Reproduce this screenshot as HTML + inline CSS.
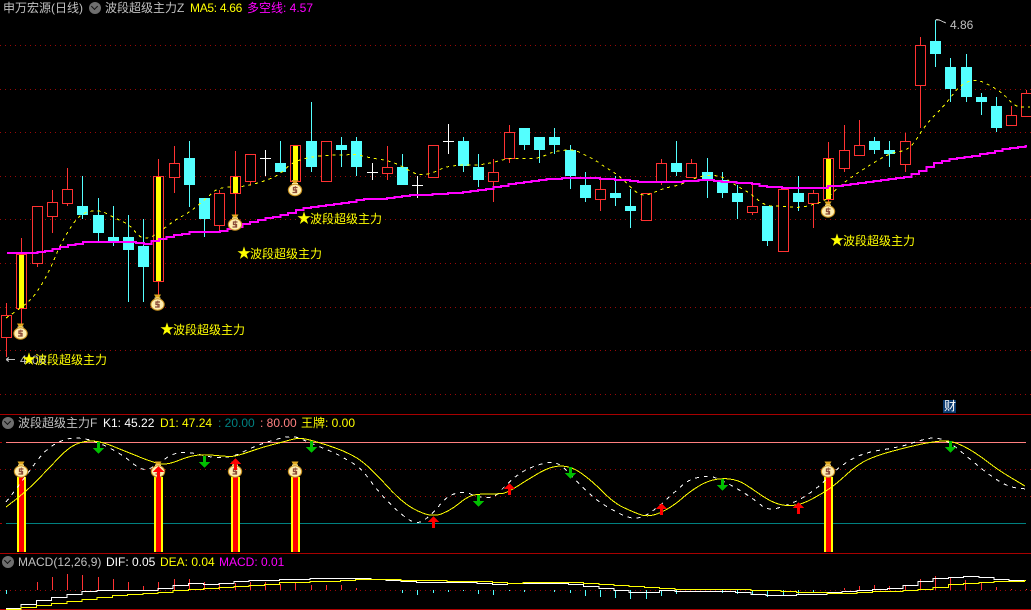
<!DOCTYPE html>
<html><head><meta charset="utf-8"><style>
html,body{margin:0;padding:0;background:#000;}
#w{position:relative;width:1031px;height:610px;overflow:hidden;background:#000;font-family:"WenQuanYi Zen Hei","Liberation Sans","Noto Sans CJK SC",sans-serif;font-size:12px;line-height:14px;}
#w svg{position:absolute;left:0;top:0;}
#w span{position:absolute;white-space:pre;}
.g{color:#c0c0c0}.y{color:#ff0}.m{color:#f0f}.h{color:#fff}
.c{position:absolute;width:12px;height:12px;border-radius:50%;background:#6e6e6e;}
.c:after{content:"";position:absolute;left:3px;top:2px;width:4px;height:4px;border-right:1.5px solid #111;border-bottom:1.5px solid #111;transform:rotate(45deg);}
#w b{display:inline-block;width:12px;font-weight:normal;font-family:"Noto Sans CJK SC",sans-serif;font-size:14px;line-height:12px;text-indent:-1px;}
</style></head><body><div id="w">
<svg width="1031" height="610" viewBox="0 0 1031 610">
<defs><g id="bag">
<path d="M-3.500-8.500h7l-2 3.500h-3z" fill="#e0a820"/><path d="M-3-5.500h6v2.500h-6z" fill="#fff0a0"/>
<ellipse cx="0" cy="1.500" rx="7.200" ry="6.200" fill="#c89020"/><ellipse cx="0" cy="1.500" rx="6.100" ry="5.200" fill="#ffeeb0"/>
<path d="M2.500-1h-4v2.500h3v2.500h-4" fill="none" stroke="#8a4a38" stroke-width="1.300"/><path d="M.3-2.500v7" stroke="#8a4a38" stroke-width=".8"/>
</g></defs>
<g shape-rendering="crispEdges">
<!-- grid -->
<path d="M0 45.500H1031M0 89.500H1031M0 132.500H1031M0 176.500H1031M0 219.500H1031M0 263.500H1031M0 307.500H1031M0 350.500H1031M0 394.500H1031M0 469.500H1031M0 496.500H1031M0 590.500H1031" stroke="#9a0808" stroke-dasharray="1 4" fill="none"/>
<path d="M0 414.500H1031M0 553.500H1031M0 609.500H1031" stroke="#a80000" fill="none"/>
<path d="M6 442.500H1026" stroke="#ff8080" fill="none"/><path d="M6 523.500H1026" stroke="#008080" fill="none"/>
<path d="M0 442.500h2M0 523.500h2" stroke="#a00" fill="none"/>
<!-- wicks -->
<path fill="none" stroke="#ff3232" d="M6.500 303V357M21.500 238V327M37.500 206V267M52.500 190V233M67.500 168V206M158.500 159V295M174.500 146V193M219.500 190V233M235.500 151V215M250.500 154V185M295.500 145V184M387.500 146V180M493.500 159V202M509.500 125V163M600.500 180V211M661.500 159V185M691.500 159V177M752.500 185V215M813.500 190V228M828.500 142V204M844.500 125V172M859.500 120V155M905.500 133V172M920.500 37V128M1011.500 106V125M1026.500 90V93"/>
<path fill="none" stroke="#54ffff" d="M82.500 176V219M98.500 198V241M113.500 206V246M128.500 215V302M143.500 219V302M189.500 141V207M204.500 198V237M280.500 141V172M311.500 102V172M341.500 137V167M356.500 137V176M402.500 154V185M463.500 137V172M478.500 154V187M524.500 128V150M539.500 137V163M554.500 128V154M570.500 145V189M585.500 172V202M615.500 176V206M630.500 189V228M676.500 141V176M707.500 158V198M722.500 172V198M737.500 185V219M767.500 206V246M798.500 176V211M874.500 137V154M889.500 141V167M935.500 20V67M950.500 58V102M966.500 54V102M981.500 93V115M996.500 97V132"/>
<path fill="none" stroke="#fff" d="M265.500 150V176M260 158.500h11M372.500 163V180M367 172.500h11M417.500 176V198M412 185.500h11M448.500 124V154M443 141.500h11"/>
<!-- bodies -->
<path fill="#000" stroke="#ff3232" d="M1.500 315.500h10v22h-10zM16.500 254.500h10v54h-10zM32.500 206.500h10v57h-10zM47.500 202.500h10v14h-10zM62.500 189.500h10v14h-10zM153.500 176.500h10v105h-10zM169.500 163.500h10v14h-10zM214.500 193.500h10v32h-10zM230.500 176.500h10v17h-10zM245.500 154.500h10v27h-10zM290.500 145.500h10v36h-10zM321.500 141.500h10v40h-10zM382.500 167.500h10v6h-10zM428.500 145.500h10v32h-10zM488.500 172.500h10v9h-10zM504.500 132.500h10v26h-10zM595.500 189.500h10v10h-10zM641.500 193.500h10v27h-10zM656.500 163.500h10v18h-10zM686.500 163.500h10v14h-10zM747.500 206.500h10v6h-10zM778.500 189.500h10v62h-10zM808.500 193.500h10v10h-10zM823.500 158.500h10v41h-10zM839.500 150.500h10v18h-10zM854.500 145.500h10v10h-10zM900.500 141.500h10v23h-10zM915.500 45.500h10v40h-10zM1006.500 115.500h10v10h-10zM1021.500 93.500h10v23h-10z"/>
<path fill="#54ffff" d="M77 206h11v9h-11zM93 215h11v18h-11zM108 237h11v4h-11zM123 237h11v13h-11zM138 246h11v21h-11zM184 158h11v27h-11zM199 198h11v21h-11zM275 163h11v9h-11zM306 141h11v26h-11zM336 145h11v5h-11zM351 141h11v26h-11zM397 167h11v18h-11zM458 141h11v25h-11zM473 167h11v13h-11zM519 128h11v17h-11zM534 137h11v13h-11zM549 137h11v8h-11zM565 150h11v26h-11zM580 185h11v13h-11zM610 193h11v5h-11zM625 206h11v5h-11zM671 163h11v9h-11zM702 172h11v8h-11zM717 180h11v13h-11zM732 193h11v9h-11zM762 206h11v35h-11zM793 193h11v9h-11zM869 141h11v9h-11zM884 150h11v4h-11zM930 41h11v13h-11zM945 67h11v22h-11zM961 67h11v30h-11zM976 97h11v5h-11zM991 106h11v22h-11z"/>
<path fill="#ff0" d="M19 255h5v53h-5zM156 177h5v104h-5zM233 177h5v16h-5zM293 146h5v35h-5zM826 159h5v40h-5z"/>
<!-- MA5 dashed -->
<polyline class="s" fill="none" stroke="#ff0" stroke-dasharray="3 4" points="6,318 21,308 35,296 50,270 60,245 75,220 85,212 100,210 115,218 130,225 140,238 150,238 158,233 175,220 190,212 208,197 215,190 225,187 240,187 255,184 270,179 280,174 293,162 310,157 330,155 346,155 356,154 370,158 385,160 395,163 405,168 415,174 425,175 435,172 445,167 460,165 480,165 495,162 510,158 525,159 540,158 552,152 565,150 575,150 585,155 595,160 605,167 615,173 625,181 635,192 645,196 655,192 665,188 680,185 690,180 705,175 722,176 735,185 750,193 765,206 780,206 800,208 815,204 825,201 835,190 850,178 870,165 890,153 910,150 925,125 945,105 960,85 975,79 990,85 1005,95 1015,107 1030,107"/>
<!-- magenta -->
<polyline class="t1" fill="none" stroke="#f0f" stroke-width="2" points="7,253 27,253 45,251 60,247 82,242 115,242 128,242 143,244 155,240 170,236 190,232 215,232 228,229 243,224 262,219 280,215 300,209 320,206 344,203 356,200 372,199 390,198 402,196 417,195 440,194 465,192 490,188 510,184 530,181 550,179 570,178 590,178 600,179 620,180 630,181 645,182 670,182 688,181 705,180 722,182 740,183 752,184 765,187 785,188 800,188 820,188 830,186 845,185 860,183 880,180 900,178 905,177 915,173 925,168 935,163 950,159 970,156 1000,150 1015,147 1027,146"/>
<!-- indicator bars -->
<path fill="#ff0" d="M17 477h9v75h-9zM154 477h9v75h-9zM231 477h9v75h-9zM291 477h9v75h-9zM824 477h9v75h-9z"/>
<path fill="#f00" d="M19 477h5v75h-5zM156 477h5v75h-5zM233 477h5v75h-5zM293 477h5v75h-5zM826 477h5v75h-5z"/>
<!-- K/D -->
<polyline class="s" fill="none" stroke="#fff" stroke-dasharray="4 5" points="6,502 17,488 30,470 47,448 67,438 83,438 100,443 123,455 143,472 157,465 173,453 190,452 213,458 233,457 253,447 270,441 293,435 310,443 333,452 344,458 361,468 377,490 394,508 411,522 421,523 434,512 447,496 464,491 477,497 494,498 504,487 517,475 531,467 552,461 564,467 577,482 594,498 607,507 630,519 644,517 657,508 677,490 688,480 708,475 721,480 738,489 755,500 768,511 788,505 803,498 821,485 835,470 861,453 901,447 921,440 936,437 951,443 971,460 988,474 1008,487 1026,489"/>
<polyline class="s" fill="none" stroke="#ff0" points="6,507 25,493 50,467 68,448 83,441 100,441 127,452 157,464 170,464 187,457 203,454 230,457 240,455 263,447 283,442 297,438 307,439 327,445 344,451 361,460 377,475 397,497 414,510 434,517 451,510 467,497 477,494 497,494 507,493 527,480 551,466 571,466 591,480 614,503 631,511 646,517 661,513 677,503 688,493 705,482 721,478 738,480 751,488 768,500 783,506 801,505 823,493 835,485 858,464 878,455 908,447 931,442 951,440 975,452 998,470 1025,486"/>
<!-- MACD hist -->
<path fill="none" stroke="#ff3232" d="M37.500 582V590M52.500 577V590M67.500 574V590M82.500 575V590M98.500 577V590M113.500 579V590M128.500 582V590M143.500 586V590M158.500 582V590M174.500 579V590M189.500 579V590M204.500 582V590M219.500 583V590M235.500 583V590M250.500 582V590M265.500 582V590M280.500 584V590M295.500 582V590M311.500 585V590M326.500 585V590M341.500 585V590M356.500 588V590M844.500 588V590M859.500 586V590M874.500 585V590M889.500 586V590M905.500 585V590M920.500 579V590M935.500 576V590M950.500 577V590M965.500 580V590M981.500 582V590M996.500 587V590M1011.500 589V590M1026.500 589V590"/>
<path fill="none" stroke="#54ffff" d="M6.500 590V594M402.500 590V593M417.500 590V595M433.500 590V593M448.500 590V592M463.500 590V591M478.500 590V594M493.500 590V595M509.500 590V591M524.500 590V592M554.500 590V592M570.500 590V593M585.500 590V596M600.500 590V597M615.500 590V598M630.500 590V599M646.500 590V599M661.500 590V596M676.500 590V594M722.500 590V593M737.500 590V594M752.500 590V595M767.500 591V597M783.500 590V595M798.500 590V595M813.500 590V593"/>
<polyline class="t2" fill="none" stroke="#fff" stroke-width="1" points="6,608 15,605 27,603 40,599 55,596 75,592 100,590 150,590 167,586 183,583 203,584 227,582 250,580 287,579 320,578 349,578 391,580 411,582 441,582 456,582 471,583 486,584 501,583 532,583 562,583 574,585 589,587 607,589 619,590 627,592 654,592 654,590 688,591 714,591 730,592 745,593 756,594 775,595 816,594 825,592 851,590 866,589 881,588 896,587 913,583 923,580 943,577 958,576 973,577 988,578 1003,580 1026,580"/>
<polyline class="t2" fill="none" stroke="#ff0" stroke-width="1" points="6,609 40,605 55,603 97,597 127,594 157,592 177,590 197,588 233,586 257,584 287,582 320,581 344,580 349,579 391,579 411,580 456,581 471,581 486,582 501,583 517,582 562,582 577,583 592,584 607,585 622,586 637,587 654,588 688,589 730,589 760,590 776,591 806,592 836,593 851,592 881,591 897,590 913,589 928,588 943,585 958,583 973,582 1003,581 1026,580"/>
<!-- arrows -->
<path fill="#00c000" d="M97 442h3v6h4l-5.500 6-5.500-6h4zM203 456h3v6h4l-5.500 6-5.500-6h4zM310 441h3v6h4l-5.500 6-5.500-6h4zM477 495h3v6h4l-5.500 6-5.500-6h4zM569 467h3v6h4l-5.500 6-5.500-6h4zM721 479h3v6h4l-5.500 6-5.500-6h4zM949 441h3v6h4l-5.500 6-5.500-6h4z"/>
</g>
<!-- bags -->
<use href="#bag" x="20.500" y="332"/><use href="#bag" x="157.500" y="303"/><use href="#bag" x="235" y="223"/><use href="#bag" x="295" y="188.500"/><use href="#bag" x="828" y="210"/>
<use href="#bag" x="21" y="470"/><use href="#bag" x="158" y="470"/><use href="#bag" x="235" y="470"/><use href="#bag" x="295" y="470"/><use href="#bag" x="828" y="470"/>
<g shape-rendering="crispEdges">
<path fill="#f00" d="M158.500 466l5.500 6h-4v6h-3v-6h-4zM235.500 458l5.500 6h-4v6h-3v-6h-4zM433.500 516l5.500 6h-4v6h-3v-6h-4zM509.500 483l5.500 6h-4v6h-3v-6h-4zM661.500 503l5.500 6h-4v6h-3v-6h-4zM798.500 502l5.500 6h-4v6h-3v-6h-4z"/>
<path fill="none" stroke="#c0c0c0" d="M6 359.500h9M6 359.500l3-2M6 359.500l3 2M936 19.500h2l8 3.500M935.500 20h3"/>
<rect x="943" y="400" width="13" height="13" fill="#0a3a70"/>
</g>
</svg>

<span class="g" style="left:3px;top:1px">申万宏源(日线)</span>
<i class="c" style="left:89px;top:2px"></i>
<span class="g" style="left:105px;top:1px">波段超级主力Z</span>
<span class="y" style="left:190px;top:1px;letter-spacing:-.3px">MA5: 4.66</span>
<span class="m" style="left:247px;top:1px">多空线: 4.57</span>

<span class="g" style="left:950px;top:18px">4.86</span>
<span class="g" style="left:20px;top:353px;letter-spacing:1px">4.08</span>

<span class="y" style="left:298px;top:212px"><b>★</b>波段超级主力</span>
<span class="y" style="left:238px;top:247px"><b>★</b>波段超级主力</span>
<span class="y" style="left:161px;top:323px"><b>★</b>波段超级主力</span>
<span class="y" style="left:831px;top:234px"><b>★</b>波段超级主力</span>
<span class="y" style="left:23px;top:353px"><b>★</b>波段超级主力</span>
<span class="h" style="left:944px;top:399px">财</span>

<i class="c" style="left:2px;top:417px"></i>
<span class="g" style="left:18px;top:416px">波段超级主力F</span>
<span class="h" style="left:103px;top:416px">K1: 45.22</span>
<span class="y" style="left:160px;top:416px">D1: 47.24</span>
<span style="left:218px;top:416px;color:#008080">: 20.00</span>
<span style="left:260px;top:416px;color:#ff8080">: 80.00</span>
<span class="y" style="left:301px;top:416px">王牌: 0.00</span>

<i class="c" style="left:2px;top:556px"></i>
<span class="g" style="left:18px;top:555px">MACD(12,26,9)</span>
<span class="h" style="left:106px;top:555px">DIF: 0.05</span>
<span class="y" style="left:160px;top:555px">DEA: 0.04</span>
<span class="m" style="left:219px;top:555px">MACD: 0.01</span>
</div>
<script>
document.querySelectorAll('polyline[class]').forEach(function(p){
  var k=p.getAttribute('class'),a=p.getAttribute('points').trim().split(/\s+/).map(function(s){return s.split(',').map(Number)}),d='',i,n=a.length;
  if(k=='s'){
    d='M'+a[0];
    for(i=1;i<n-1;i++){d+='Q'+a[i]+' '+((a[i][0]+a[i+1][0])/2)+','+((a[i][1]+a[i+1][1])/2)}
    d+='L'+a[n-1];
  }else{
    var st=k=='t1'?7.6:15.2,x=a[0][0],j=0,e=a[n-1][0];
    d='M'+x+' '+(a[0][1]+(k=='t2'?.5:0));
    for(;x<=e;x+=st){
      while(j<n-2&&a[j+1][0]<x)j++;
      var u=a[j+1][0]==a[j][0]?0:(x-a[j][0])/(a[j+1][0]-a[j][0]);
      var y=Math.round(a[j][1]+(a[j+1][1]-a[j][1])*u)+(k=='t2'?.5:0);
      d+='V'+y+'H'+Math.min(x+st,e);
    }
  }
  var q=document.createElementNS('http://www.w3.org/2000/svg','path');
  ['fill','stroke','stroke-width','stroke-dasharray'].forEach(function(t){var v=p.getAttribute(t);if(v)q.setAttribute(t,v)});
  q.setAttribute('d',d);
  p.parentNode.replaceChild(q,p);
});
</script>
</body></html>
